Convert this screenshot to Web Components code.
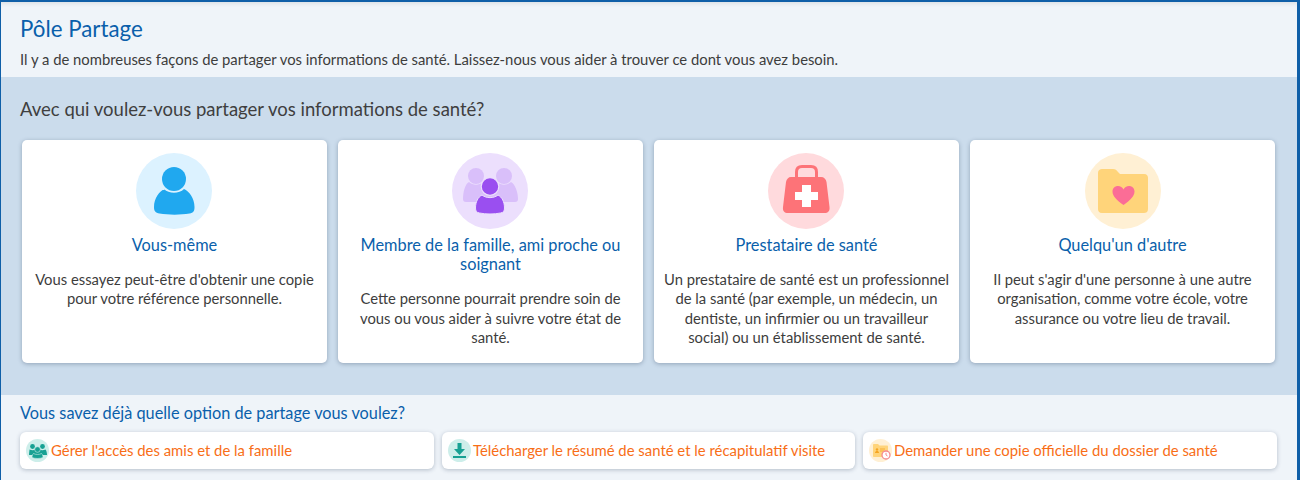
<!DOCTYPE html>
<html lang="fr">
<head>
<meta charset="utf-8">
<title>Pôle Partage</title>
<style>
html, body { margin: 0; background: #eff4f9; }
body { font-family: Lato, "Noto Sans", sans-serif; height: 480px; overflow: hidden; }
</style>
</head>
<body>
<template id="t-shell">
  <style>
    :host { display: block; height: 480px; box-sizing: border-box; border: solid #0f5fa8; border-width: 2px 3px 0 1px; background: #eff4f9; overflow: hidden; }
    header { height: 75px; box-sizing: border-box; padding: 12px 19px 0; box-shadow: inset 0 5px 5px -4px rgba(0,0,0,.1); }
    h1 { margin: 0; font-size: 22.3px; line-height: 30px; font-weight: 400; color: #0a5fab; }
    p { margin: 5px 0 0; font-size: 14.82px; line-height: 20px; color: #3d3d3d; }
    .band { height: 318px; box-sizing: border-box; background: #cbdcec; padding: 18px 22px 0 21px; }
    h2 { margin: 0 0 0 -2px; font-size: 18.5px; line-height: 28px; font-weight: 400; color: #3f3f3f; }
    .cards { display: grid; grid-template-columns: repeat(4, 305px); gap: 11px; margin-top: 17px; }
    .more { padding: 8px 19px 0; }
    h3 { margin: 0; font-size: 16.3px; line-height: 20px; font-weight: 400; color: #0a5fab; }
    .links { display: grid; grid-template-columns: 414px 413px 414px; gap: 8px; margin-top: 9px; }
  </style>
  <header><h1><slot name="title"></slot></h1><p><slot name="intro"></slot></p></header>
  <section class="band"><h2><slot name="question"></slot></h2><div class="cards"><slot name="cards"></slot></div></section>
  <section class="more"><h3><slot name="more"></slot></h3><div class="links"><slot name="links"></slot></div></section>
</template>

<template id="t-card">
  <style>
    :host { display: block; height: 223px; box-sizing: border-box; background: #fff; border-radius: 5px; box-shadow: 0 1px 4px rgba(40,60,90,.35); padding: 13px 10px 0; text-align: center; }
    .disc { display: flex; justify-content: center; margin-left: -1px; }
    .title { margin-top: 5.6px; font-size: 16.35px; line-height: 19.5px; color: #0a5fab; }
    .body { margin-top: 15.6px; font-size: 14.8px; line-height: 19.5px; color: #3d3d3d; }
  </style>
  <div class="disc"><slot name="icon"></slot></div>
  <div class="title"><slot name="title"></slot></div>
  <div class="body"><slot></slot></div>
</template>

<template id="t-link">
  <style>
    :host { display: flex; align-items: center; gap: 2px; height: 37px; box-sizing: border-box; padding-left: 6px; background: #fff; border-radius: 6px; box-shadow: 0 1px 4px rgba(40,60,90,.3); font-size: 14.88px; color: #f86e17; white-space: nowrap; }
    .label { padding-bottom: 1px; }
  </style>
  <slot name="icon"></slot><span class="label"><slot></slot></span>
</template>

<pole-partage>
  <span slot="title">Pôle Partage</span>
  <span slot="intro">Il y a de nombreuses façons de partager vos informations de santé. Laissez-nous vous aider à trouver ce dont vous avez besoin.</span>
  <span slot="question">Avec qui voulez-vous partager vos informations de santé?</span>

  <share-card slot="cards">
    <svg slot="icon" width="76" height="76" viewBox="0 0 76 76"><circle cx="38" cy="38" r="38" fill="#dcf2ff"/><circle cx="38" cy="26" r="12" fill="#20a8ef"/><path d="M28 36c5 5 15 5 20 0 5 2 10.500 9 10.500 18 0 4-1 6-5 6.500-9 1.500-21 1.500-30 0-4-.5-5.500-2.500-5.500-6.500 0-9 5.500-16 10.500-18z" fill="#20a8ef"/></svg>
    <span slot="title">Vous-même</span>
    Vous essayez peut-être d'obtenir une copie pour votre référence personnelle.
  </share-card>

  <share-card slot="cards">
    <svg slot="icon" width="76" height="76" viewBox="0 0 76 76"><circle cx="38" cy="38" r="38" fill="#ecdffd"/><g fill="#d9bffa"><circle cx="24" cy="23" r="8"/><circle cx="52" cy="23" r="8"/><path d="M17 29c4 3.500 10 3.500 14 0 4 1 7 4 8 8v12H14c-2 0-3-1-3-3 0-7 2-15 6-17z"/><path d="M59 29c-4 3.500-10 3.500-14 0-4 1-7 4-8 8v12h26c2 0 3-1 3-3 0-7-3-15-7-17z"/></g><circle cx="38" cy="33.500" r="8.800" fill="#9a4ff0" stroke="#ecdffd" stroke-width="1.200"/><path d="M30 42c4 3.500 12 3.500 16 0 4 2 6.500 7 6.500 13 0 3-1 4.500-4 5-6 1.300-15 1.300-21 0-3-.5-4-2-4-5 0-6 2.500-11 6.500-13z" fill="#9a4ff0" stroke="#ecdffd" stroke-width="1"/></svg>
    <span slot="title">Membre de la famille, ami proche ou soignant</span>
    Cette personne pourrait prendre soin de vous ou vous aider à suivre votre état de santé.
  </share-card>

  <share-card slot="cards">
    <svg slot="icon" width="76" height="76" viewBox="0 0 76 76"><circle cx="38" cy="38" r="38" fill="#ffdadd"/><path d="M28.500 25v-6c0-3.500 2-5.500 5.500-5.500h9c3.500 0 5.500 2 5.500 5.500v6" fill="none" stroke="#fd7378" stroke-width="3"/><path d="M23 24h30c3 0 5 2 5.500 5l3 25c.5 4-1.500 6-5 6H20c-3.500 0-5.500-2-5-6l3-25c.5-3 2.500-5 5-5z" fill="#fd7378"/><path d="M34 32h9v7h7v8h-7v7h-9v-7h-7v-8h7z" fill="#fff"/></svg>
    <span slot="title">Prestataire de santé</span>
    Un prestataire de santé est un professionnel de la santé (par exemple, un médecin, un dentiste, un infirmier ou un travailleur social) ou un établissement de santé.
  </share-card>

  <share-card slot="cards">
    <svg slot="icon" style="margin-left:2px" width="76" height="76" viewBox="0 0 76 76"><circle cx="38" cy="38" r="38" fill="#fff0d4"/><path d="M17 16h11c2.500 0 3.500 1 5 3l2 2h24c3 0 4 2 4 4v31c0 3-2 4-4 4H17c-3 0-4-2-4-4V20c0-3 2-4 4-4z" fill="#ffd47a"/><path d="M38.500 52c-7-5-11-9-11-13.500 0-3.300 2.500-5.500 5.500-5.500 2.500 0 4.500 1.500 5.500 3.500 1-2 3-3.500 5.500-3.500 3 0 5.500 2.200 5.500 5.500 0 4.500-4 8.500-11 13.500z" fill="#fb6d96"/></svg>
    <span slot="title">Quelqu'un d'autre</span>
    Il peut s'agir d'une personne à une autre organisation, comme votre école, votre assurance ou votre lieu de travail.
  </share-card>

  <span slot="more">Vous savez déjà quelle option de partage vous voulez?</span>

  <share-link slot="links">
    <svg slot="icon" width="23" height="23" viewBox="0 0 23 23"><circle cx="11.500" cy="11.500" r="11.500" fill="#cdeeea"/><g fill="#17a193"><circle cx="6.500" cy="7.500" r="2.400"/><circle cx="16.500" cy="7.500" r="2.400"/><path d="M3.500 10.500c2 1 4.500 1 6 0h4c1.500 1 4 1 6 0 1 1 1.500 3.500 1.500 5.500h-18c0-2 .5-4.500.5-5.500z"/><circle cx="11.500" cy="10.500" r="2.800" stroke="#cdeeea" stroke-width=".6"/><path d="M7.500 14.500c2 1.300 6 1.300 8 0 1 .8 1.500 2.500 1.500 4-3 1.300-8 1.300-11 0 0-1.500.5-3.200 1.500-4z" stroke="#cdeeea" stroke-width=".6"/></g></svg>
    Gérer l'accès des amis et de la famille
  </share-link>
  <share-link slot="links">
    <svg slot="icon" width="23" height="23" viewBox="0 0 23 23"><circle cx="11.500" cy="11.500" r="11.500" fill="#cdeeea"/><path d="M9.500 4h4v6h3.500l-5.500 6-5.500-6h3.500z" fill="#17a193"/><rect x="5" y="17" width="13" height="2" fill="#17a193"/></svg>
    Télécharger le résumé de santé et le récapitulatif visite
  </share-link>
  <share-link slot="links">
    <svg slot="icon" width="23" height="23" viewBox="0 0 23 23"><circle cx="11.500" cy="11.500" r="11.500" fill="#fff0d4"/><path d="M5 5h4l1.500 1.500H18c.7 0 1 .5 1 1V17c0 .7-.5 1-1 1H5c-.7 0-1-.5-1-1V6c0-.7.5-1 1-1z" fill="#ffd47a"/><circle cx="8" cy="10.500" r="1.200" fill="#f5a623"/><path d="M6 14c0-1.500 1-2 2-2s2 .5 2 2z" fill="#f5a623"/><path d="M11 10h5M11 12h4" stroke="#f5a623" stroke-width=".8"/><circle cx="17" cy="16" r="4" fill="#fff" stroke="#f58a8e" stroke-width="1.300"/><path d="M17 13.800V16l1.500 1" fill="none" stroke="#f58a8e" stroke-width="1"/></svg>
    Demander une copie officielle du dossier de santé
  </share-link>
</pole-partage>

<script>
class ShadowBlock extends HTMLElement {
  constructor() {
    super()
    this.attachShadow({ mode: 'open' })
    const template = document.getElementById(this.constructor.templateId)
    this.shadowRoot.append(template.content.cloneNode(true))
  }
}

class PolePartage extends ShadowBlock {
  static templateId = 't-shell'
}

class ShareCard extends ShadowBlock {
  static templateId = 't-card'
}

class ShareLink extends ShadowBlock {
  static templateId = 't-link'
}

customElements.define('pole-partage', PolePartage)
customElements.define('share-card', ShareCard)
customElements.define('share-link', ShareLink)
</script>
</body>
</html>
